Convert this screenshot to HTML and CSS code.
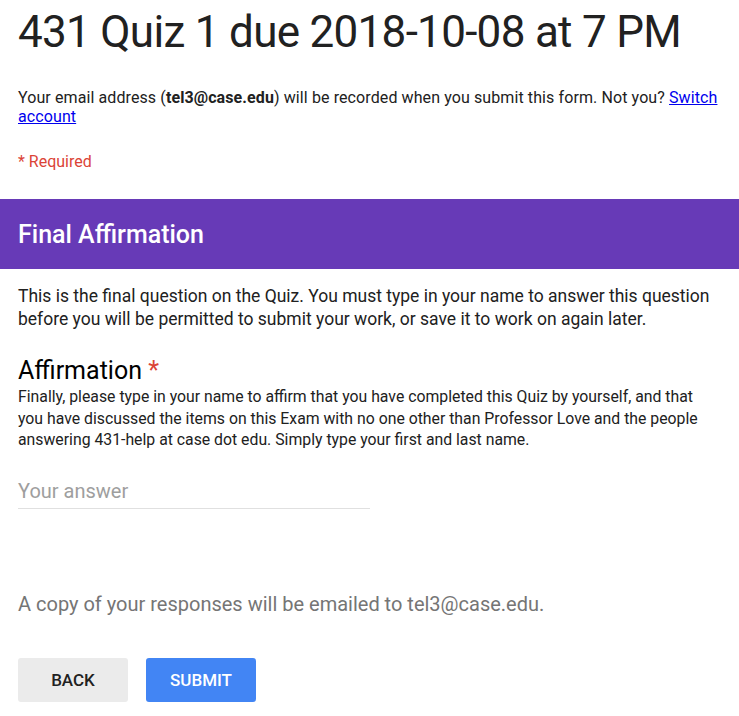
FILE: index.html
```html
<!DOCTYPE html>
<html>
<head>
<meta charset="utf-8">
<link rel="stylesheet" href="styles.css">
</head>
<body>
<div class="page">
  <h1 class="title">431 Quiz 1 due 2018-10-08 at 7 PM</h1>
  <p class="email">Your email address (<b>tel3@case.edu</b>) will be recorded when you submit this form. Not you? <a href="#">Switch</a> <a href="#">account</a></p>
  <p class="required">* Required</p>
  <div class="section-head">Final Affirmation</div>
  <p class="section-desc">This is the final question on the Quiz. You must type in your name to answer this question before you will be permitted to submit your work, or save it to work on again later.</p>
  <div class="question">
    <div class="q-title">Affirmation <span class="star">*</span></div>
    <div class="q-desc">Finally, please type in your name to affirm that you have completed this Quiz by yourself, and that you have discussed the items on this Exam with no one other than Professor Love and the people answering 431-help at case dot edu. Simply type your first and last name.</div>
    <div class="answer">Your answer</div>
  </div>
  <p class="copy">A copy of your responses will be emailed to tel3@case.edu.</p>
  <div class="buttons">
    <button class="btn back">BACK</button>
    <button class="btn submit">SUBMIT</button>
  </div>
</div>
</body>
</html>
```
FILE: styles.css
```css
html, body {
  margin: 0;
  padding: 0;
  background: #fff;
}
body {
  font-family: Roboto, "Liberation Sans", sans-serif;
  color: #212121;
}
.title {
  margin: 0;
  padding: 4px 18px 0;
  font-size: 44px;
  letter-spacing: -0.7px;
  font-weight: 400;
  line-height: 56px;
  color: #212121;
}
.email {
  margin: 28px 18px 0;
  font-size: 16px;
  letter-spacing: 0.1px;
  line-height: 19px;
}
.email b { font-weight: 700; }
.email a { color: #0000ee; }
.required {
  margin: 26px 18px 0;
  font-size: 16px;
  line-height: 19px;
  color: #db4437;
}
.section-head {
  margin-top: 28px;
  height: 70px;
  background: #673ab7;
  color: #fff;
  font-size: 25px;
  font-weight: 500;
  display: flex;
  align-items: center;
  padding: 0 18px;
}
.section-desc {
  margin: 16px 18px 0;
  font-size: 17.5px;
  line-height: 23px;
}
.question {
  padding: 0 18px;
  margin-top: 25px;
}
.q-title {
  font-size: 25px;
  line-height: 30px;
  color: #000;
}
.star { color: #db4437; }
.q-desc {
  font-size: 15.8px;
  line-height: 21.5px;
}
.answer {
  margin-top: 27px;
  width: 352px;
  font-size: 20px;
  line-height: 26px;
  color: #9e9e9e;
  padding-bottom: 4px;
  border-bottom: 1px solid #e0e0e0;
}
.copy {
  margin: 83px 18px 0;
  font-size: 20px;
  line-height: 24px;
  color: #757575;
}
.buttons {
  display: flex;
  gap: 18px;
  margin: 42px 18px 0;
}
.btn {
  width: 110px;
  height: 44px;
  border: none;
  border-radius: 3px;
  font-family: Roboto, "Liberation Sans", sans-serif;
  font-size: 17px;
  font-weight: 500;
}
.back { background: #ebebeb; color: #212121; }
.submit { background: #4285f4; color: #fff; }
```
